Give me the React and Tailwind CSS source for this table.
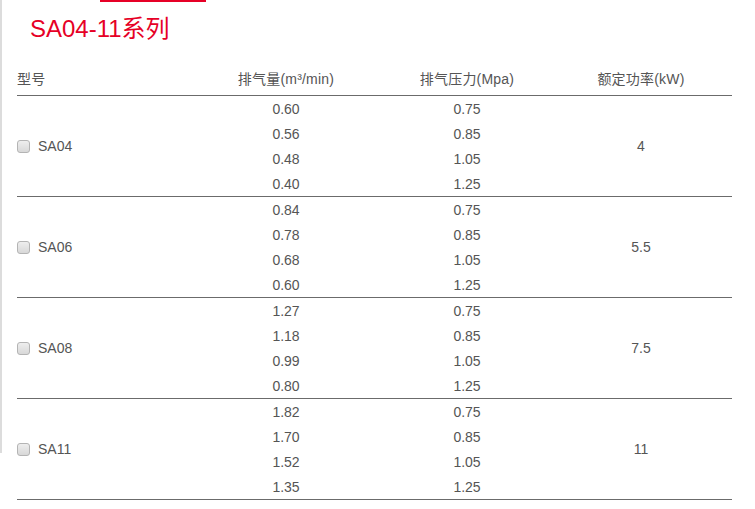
import React from 'react';

const groups = [
    { model: 'SA04', power: '4', flow: ['0.60', '0.56', '0.48', '0.40'] },
    { model: 'SA06', power: '5.5', flow: ['0.84', '0.78', '0.68', '0.60'] },
    { model: 'SA08', power: '7.5', flow: ['1.27', '1.18', '0.99', '0.80'] },
    { model: 'SA11', power: '11', flow: ['1.82', '1.70', '1.52', '1.35'] },
];

const pressures = ['0.75', '0.85', '1.05', '1.25'];

const cols = 'grid grid-cols-[171px_196px_166px_182px]';

const App = () => {
    return (
        <div className="flex w-[755px] h-[509px] bg-white overflow-hidden font-['Liberation_Sans','Noto_Sans_CJK_SC',sans-serif] text-[14px] text-[#555]">
            {/* left edge of the page container */}
            <div className="w-[2px] h-[453px] bg-[#dcdcdc] shrink-0" />

            <div className="flex flex-col">
                {/* title */}
                <div className="h-[61px] flex flex-col">
                    <div className="ml-[98px] w-[106px] h-[2px] bg-[#e60026]" />
                    <h1 className="ml-[28px] mt-[14px] text-[24px] leading-[25px] text-[#e60026]">SA04-11系列</h1>
                </div>

                {/* table */}
                <div className="ml-[15px] w-[715px]">
                    <div className={`${cols} h-[35px] pt-[2px] items-center border-b border-[#6b6b6b] tracking-[0.2px]`}>
                        <div>型号</div>
                        <div className="text-center">排气量(m³/min)</div>
                        <div className="text-center">排气压力(Mpa)</div>
                        <div className="text-center">额定功率(kW)</div>
                    </div>

                    {groups.map((g) => (
                        <div key={g.model} className={`${cols} grid-rows-[repeat(4,25px)] border-b border-[#6b6b6b]`}>
                            <label className="row-span-4 flex items-center gap-[8px] pt-px">
                                <input
                                    type="checkbox"
                                    className="m-0 w-[13px] h-[13px] appearance-none rounded-[3px] border border-[#b4b4b4] bg-gradient-to-b from-[#eeeeee] to-[#d8d8d8]"
                                />
                                <span>{g.model}</span>
                            </label>
                            <div className="row-span-4 flex flex-col">
                                {g.flow.map((f, i) => (
                                    <div key={i} className="h-[25px] pt-px flex items-center justify-center">{f}</div>
                                ))}
                            </div>
                            <div className="row-span-4 flex flex-col">
                                {pressures.map((p, i) => (
                                    <div key={i} className="h-[25px] pt-px flex items-center justify-center">{p}</div>
                                ))}
                            </div>
                            <div className="row-span-4 flex items-center justify-center pt-px">{g.power}</div>
                        </div>
                    ))}
                </div>
            </div>
        </div>
    );
};

export default App;
